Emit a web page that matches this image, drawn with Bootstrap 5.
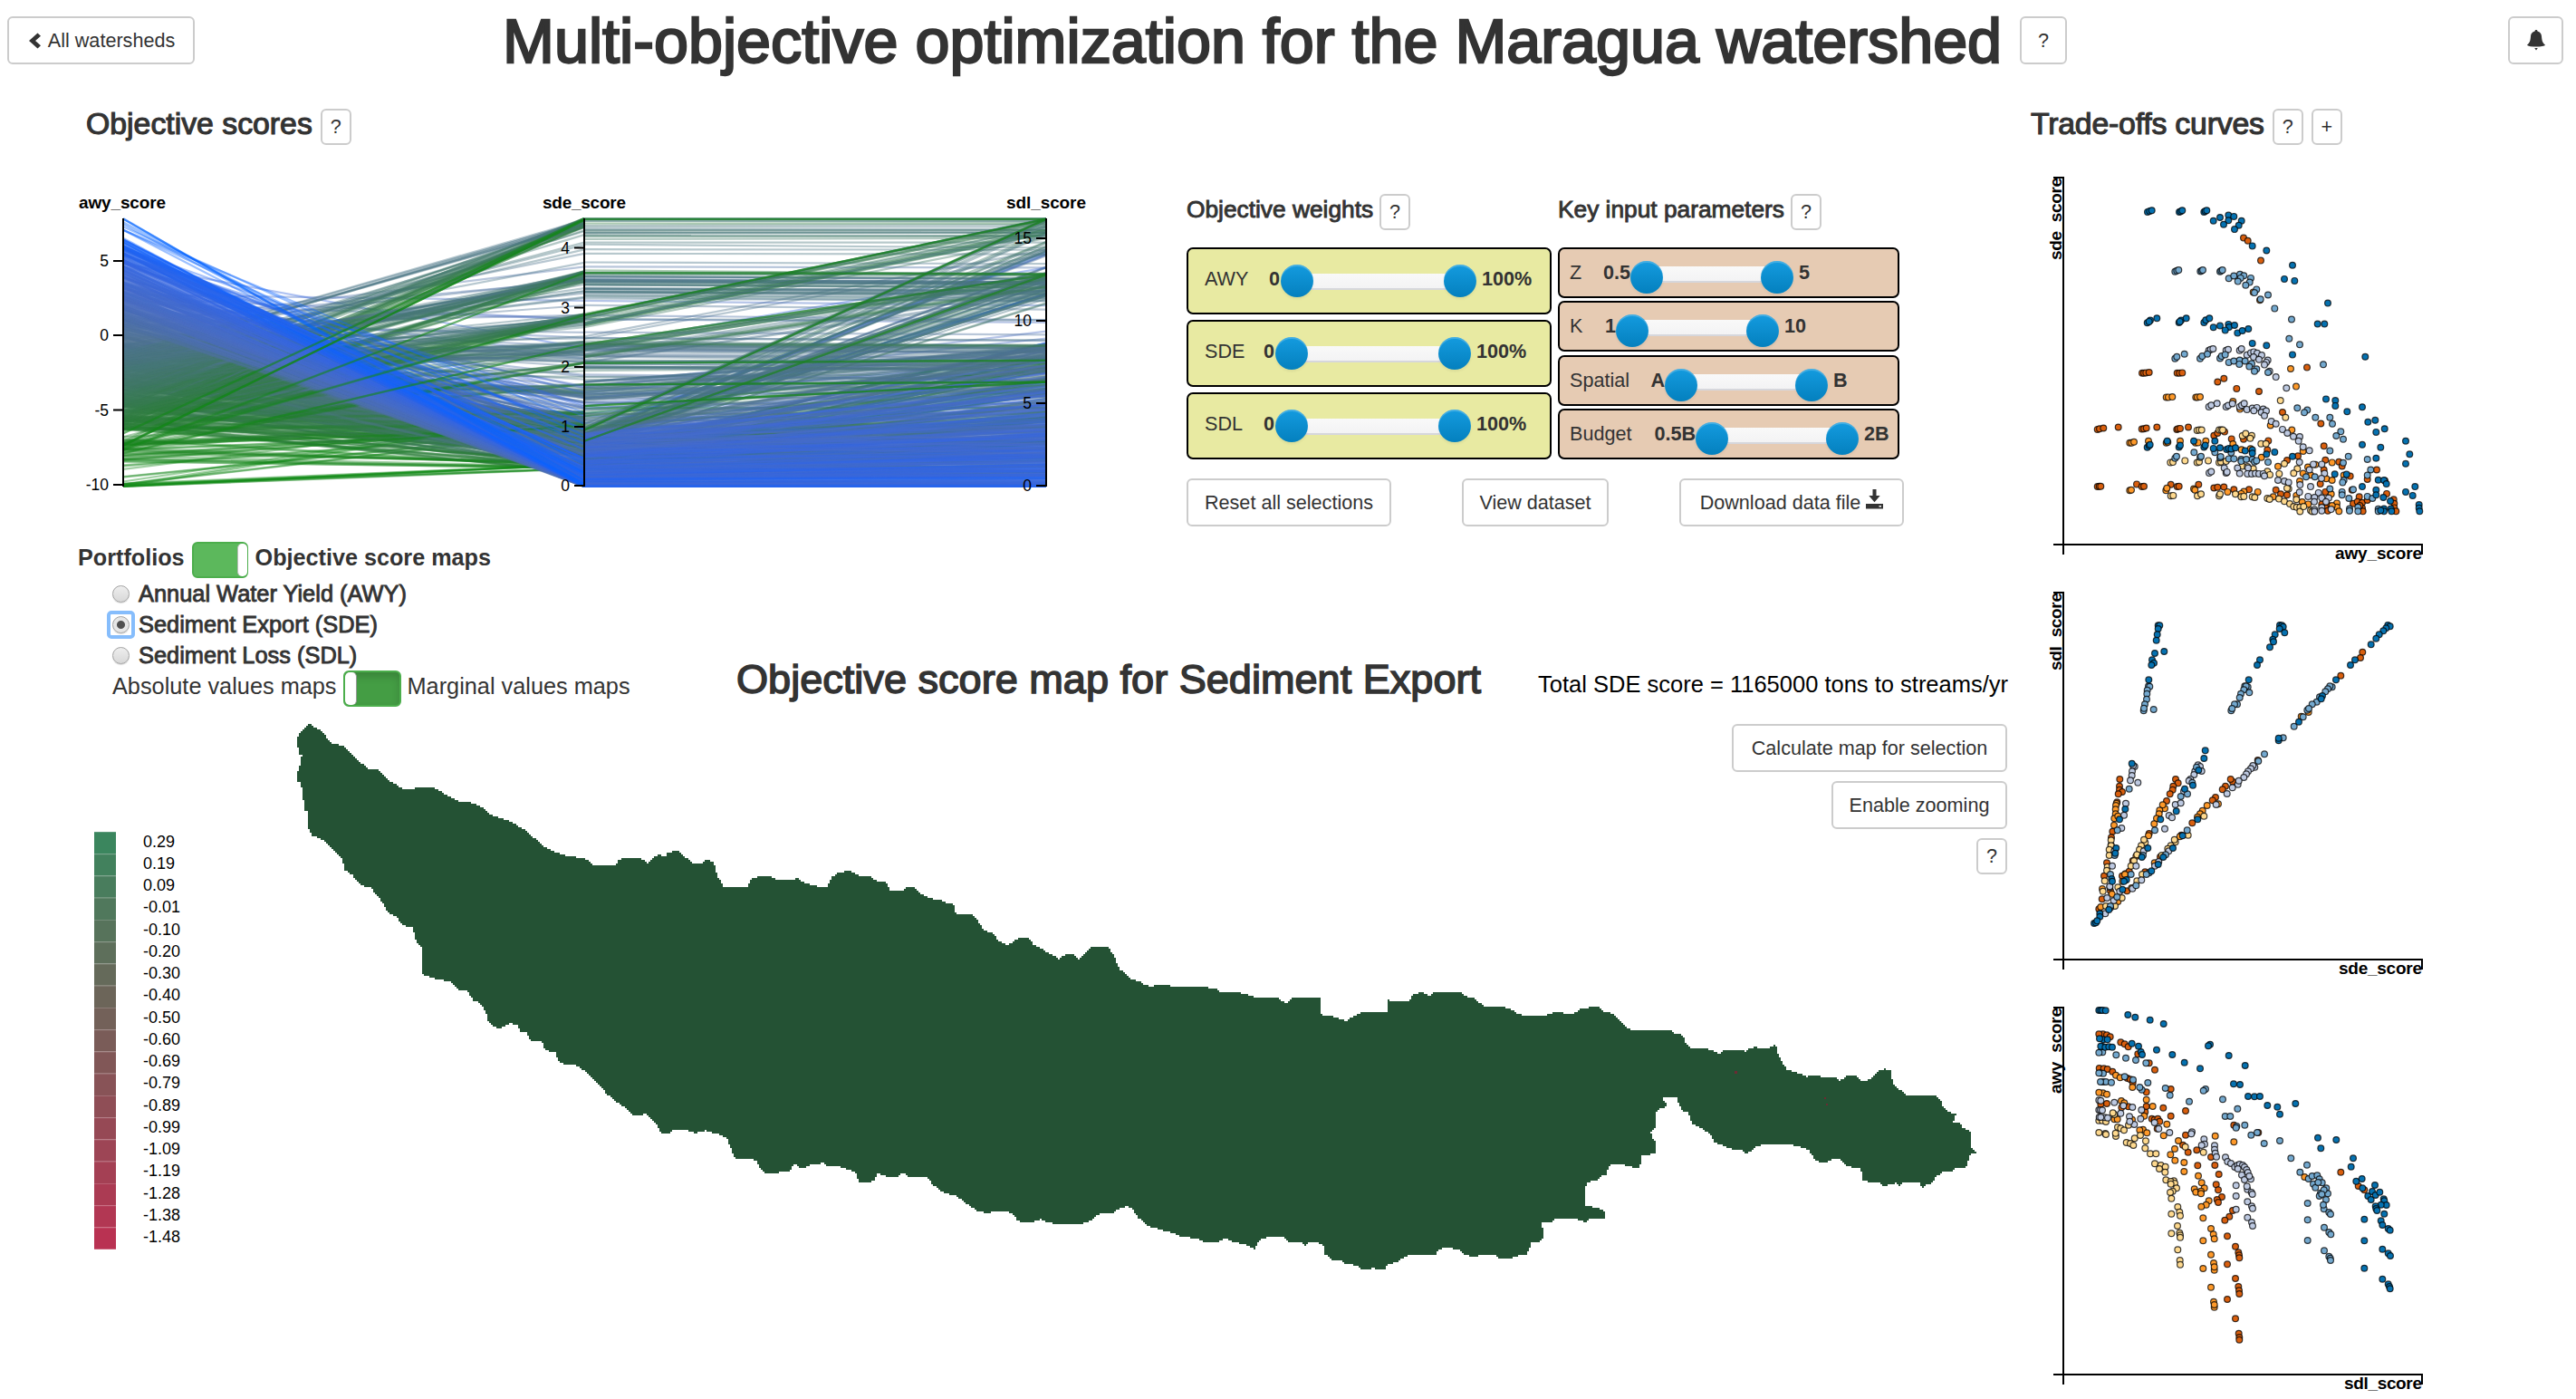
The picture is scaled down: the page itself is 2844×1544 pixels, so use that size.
<!DOCTYPE html>
<html lang="en">
<head>
<meta charset="utf-8">
<title>Multi-objective optimization for the Maragua watershed</title>
<link href="https://cdn.jsdelivr.net/npm/bootstrap@5.3.0/dist/css/bootstrap.min.css" rel="stylesheet">
<style>
body{font-family:"Liberation Sans",Arial,sans-serif;font-size:21.600px;line-height:30px;color:#333;background:#fff;width:2844px;height:1544px;overflow:hidden}
.md{-webkit-text-stroke:.034em currentColor}
.top-bar{height:100px;padding:18px 14px 0 8px}
.btn-plain{--bs-btn-color:#333;--bs-btn-bg:#fff;--bs-btn-border-color:#ccc;--bs-btn-hover-bg:#e6e6e6;--bs-btn-hover-color:#333;--bs-btn-border-radius:6px;--bs-btn-font-size:21.600px;border-width:2px;height:53px;padding:0;line-height:1;display:inline-flex;align-items:center;justify-content:center;white-space:nowrap}
.btn-q{width:34px;height:40px}
.b-back{width:207px}.b-help{width:52px}.b-bell{width:61px}.b-reset{width:226px}.b-view{width:162px}.b-down{width:248px;gap:6px}.b-calc{width:304px}.b-zoom{width:194px}
.title-group{gap:20px;margin-left:340px}
.page-title{font-size:68.300px;line-height:54px;margin:0;white-space:nowrap}
.sec-title{font-size:33.800px;line-height:32px;margin:0;white-space:nowrap}
.sub-title{font-size:26.300px;line-height:34px;margin:0;white-space:nowrap}
.left-side{width:2230px}
.upper-row{height:491px}
.score-panel{width:1310px}
.score-head,.trade-head{height:60px;padding-top:20px;gap:9px}
.trade-head{padding-left:4px}
.trade-head .sec-title{letter-spacing:-.2px}
.score-head{padding-left:95px}
.ctl-panel{width:792px;padding-top:114px}
.ctl-head{height:59px;gap:7px;padding-bottom:20px}
.weights{width:403px;margin-right:7px}
.params{width:377px}
.wstack{gap:6px}.pstack{gap:3.300px}
.wbox,.pbox{border:2px solid #000;border-radius:7px;display:flex;align-items:flex-start;white-space:nowrap}
.wbox{height:74px;background:#e8eaa2;padding:18px 0 0 18px}
.pbox{height:56px;background:#e6cbb3;padding:11px 0 0 11px}
.lab-grp{display:flex;justify-content:space-between;line-height:30px}
.g-awy{width:83px}.g-sde{width:77px}.g-z{width:67px}.g-k{width:51px}.g-sp{width:105px}.g-bu{width:139px}
.track{height:18px;background:linear-gradient(#f9f9f9,#f3f3f4);border-bottom:2px solid #d6d7dc;position:relative;margin:0 24px 0 18px}
.wbox .track{width:180px;margin-top:9px;margin-left:19px}
.pbox .track{width:144px;margin-top:8px}
.knob{position:absolute;width:36px;height:36px;border-radius:50%;background:linear-gradient(#149bdf,#0480be);box-shadow:inset 0 2px 0 rgba(255,255,255,.2),0 2px 3px rgba(0,0,0,.06)}
.wbox .knob{top:-10px}
.pbox .knob{top:-6px}
.knob.lo{left:-18px}.knob.hi{right:-18px}
.tool-row{margin-top:21px}
.map-head{height:208px;padding:7px 0 0 86px}
.map-switches{width:727px}
.sw-row{gap:8px;height:40px;font-size:25.200px;line-height:34px}
.sw{height:40px;border-radius:6px;border:2px solid #4cae4c;background:#5cb85c;display:flex}
.sw i{width:11px;background:#fff;border-radius:5px}
.sw-on{width:62px;justify-content:flex-end}
.sw-on i{border-left:1px solid #bbb;margin-right:-1px}
.sw-off{width:64px;background:#449d44;box-shadow:inset 0 5px 8px rgba(0,0,0,.16)}
.sw-off i{width:13px;border-right:1px solid #999}
.opt-list{font-size:25.400px;line-height:34px;padding-left:38px;white-space:nowrap}
.opt-list>div{gap:10px}
.abs-row{font-size:25.300px;gap:7px}
.rb{width:19px;height:19px;border-radius:50%;background:linear-gradient(#eee,#d8d8d8);border:1.500px solid #a3a3a3;box-shadow:0 1px 1px rgba(0,0,0,.15)}
.rb-on{position:relative;background:radial-gradient(circle,#505050 0 4px,#e6e6e6 5px)}
.rb-on::after{content:"";position:absolute;inset:-7px;border:4px solid #86bdfc;border-radius:5px}
.map-line{padding-top:127px;gap:63px}
.map-title{font-size:45.100px;line-height:50px;margin:0;white-space:nowrap}
.map-total{font-size:25.500px;color:#000;padding-top:15px;white-space:nowrap}
.map-stack{display:grid;width:2230px;height:746px}
.map-stack>*{grid-area:1/1}
.map-tools{justify-self:end;align-self:start;padding-right:14px;gap:10px}
svg{display:block}
svg text{font-family:"Liberation Sans",Arial,sans-serif;fill:#000}
.axl{font-weight:700;font-size:19px}
.tk{font-size:17.500px}
.lg{font-size:18px}
</style>
<script src="https://cdn.jsdelivr.net/npm/bootstrap@5.3.0/dist/js/bootstrap.bundle.min.js"></script>
</head>
<body>
<header class="top-bar d-flex align-items-start">
  <button class="btn btn-plain b-back"><svg width="15" height="20" viewBox="0 0 15 20" class="me-2"><path d="M11.500 1.500 15 4.800 9 10l6 5.200-3.500 3.300L2 10z" fill="#333"/></svg><span>All watersheds</span></button>
  <div class="title-group d-flex"><h1 class="page-title md">Multi-objective optimization for the Maragua watershed</h1><button class="btn btn-plain b-help">?</button></div>
  <button class="btn btn-plain b-bell ms-auto"><svg width="20" height="23" viewBox="0 0 20 23"><path d="M10 0c1 0 1.500.700 1.500 1.600 2.800.7 4.300 2.800 4.500 5.400.3 4.500 1 7.500 4 9.500-.5 1.500-5 2.100-10 2.100S.5 18 0 16.500c3-2 3.700-5 4-9.500.2-2.600 1.700-4.700 4.500-5.400C8.500.700 9 0 10 0zM8.200 20h3.600L10 22.500z" fill="#333"/></svg></button>
</header>
<main class="d-flex">
  <div class="left-side">
    <section class="upper-row d-flex">
      <div class="score-panel">
        <div class="score-head d-flex"><h3 class="sec-title md">Objective scores</h3><button class="btn btn-plain btn-q">?</button></div>
        <svg id="par" width="1240" height="410" viewBox="0 160 1240 410"></svg>
      </div>
      <div class="ctl-panel">
        <div class="d-flex">
          <div class="weights">
            <div class="ctl-head d-flex"><h4 class="sub-title md">Objective weights</h4><button class="btn btn-plain btn-q">?</button></div>
            <div class="wstack d-flex flex-column">
              <div class="wbox"><div class="lab-grp g-awy"><span>AWY</span><b>0</b></div><div class="track"><span class="knob lo"></span><span class="knob hi"></span></div><b>100%</b></div>
              <div class="wbox"><div class="lab-grp g-sde"><span>SDE</span><b>0</b></div><div class="track"><span class="knob lo"></span><span class="knob hi"></span></div><b>100%</b></div>
              <div class="wbox"><div class="lab-grp g-sde"><span>SDL</span><b>0</b></div><div class="track"><span class="knob lo"></span><span class="knob hi"></span></div><b>100%</b></div>
            </div>
          </div>
          <div class="params">
            <div class="ctl-head d-flex"><h4 class="sub-title md">Key input parameters</h4><button class="btn btn-plain btn-q">?</button></div>
            <div class="pstack d-flex flex-column">
              <div class="pbox"><div class="lab-grp g-z"><span>Z</span><b>0.5</b></div><div class="track"><span class="knob lo"></span><span class="knob hi"></span></div><b>5</b></div>
              <div class="pbox"><div class="lab-grp g-k"><span>K</span><b>1</b></div><div class="track"><span class="knob lo"></span><span class="knob hi"></span></div><b>10</b></div>
              <div class="pbox"><div class="lab-grp g-sp"><span>Spatial</span><b>A</b></div><div class="track"><span class="knob lo"></span><span class="knob hi"></span></div><b>B</b></div>
              <div class="pbox"><div class="lab-grp g-bu"><span>Budget</span><b>0.5B</b></div><div class="track"><span class="knob lo"></span><span class="knob hi"></span></div><b>2B</b></div>
            </div>
          </div>
        </div>
        <div class="tool-row d-flex justify-content-between">
          <button class="btn btn-plain b-reset">Reset all selections</button>
          <button class="btn btn-plain b-view">View dataset</button>
          <button class="btn btn-plain b-down"><span>Download data file</span><svg width="19" height="22" viewBox="0 0 19 22" class="mb-2"><path d="M7.500 0h4v7h4.200L9.500 14.200 3.300 7h4.200zM0 16h19v5.500H0zm14.500 2v1.500h2.500V18z" fill="#333" fill-rule="evenodd"/></svg></button>
        </div>
      </div>
    </section>
    <section class="map-head d-flex">
      <div class="map-switches">
        <div class="sw-row d-flex"><b>Portfolios</b><span class="sw sw-on"><i></i></span><b>Objective score maps</b></div>
        <div class="opt-list md">
          <div class="d-flex"><span class="rb mt-2"></span><span>Annual Water Yield (AWY)</span></div>
          <div class="d-flex"><span class="rb rb-on mt-2"></span><span>Sediment Export (SDE)</span></div>
          <div class="d-flex"><span class="rb mt-2"></span><span>Sediment Loss (SDL)</span></div>
        </div>
        <div class="opt-list abs-row d-flex"><span>Absolute values maps</span><span class="sw sw-off"><i></i></span><span>Marginal values maps</span></div>
      </div>
      <div class="map-line d-flex align-items-start"><h2 class="map-title md">Objective score map for Sediment Export</h2><span class="map-total">Total SDE score = 1165000 tons to streams/yr</span></div>
    </section>
    <section class="map-stack">
      <svg id="map" width="2230" height="745" viewBox="0 800 2230 745"></svg>
      <div class="map-tools d-flex flex-column align-items-end">
        <button class="btn btn-plain b-calc">Calculate map for selection</button>
        <button class="btn btn-plain b-zoom">Enable zooming</button>
        <button class="btn btn-plain btn-q">?</button>
      </div>
    </section>
  </div>
  <aside class="ps-2">
    <div class="trade-head d-flex"><h3 class="sec-title md">Trade-offs curves</h3><button class="btn btn-plain btn-q">?</button><button class="btn btn-plain btn-q">+</button></div>
    <svg id="s1" width="500" height="470" viewBox="2238 160 500 470"></svg>
    <svg id="s2" width="500" height="460" viewBox="2238 630 500 460"></svg>
    <svg id="s3" width="500" height="454" viewBox="2238 1090 500 454"></svg>
  </aside>
</main>
<script>
const COL={R:'#d95f0e',O:'#fe9929',Y:'#fed98e',V:'#bdc9e1',L:'#74a9cf',D:'#0571b0'};
const S1={
D:"423,396 430,393 437,391 528,396 533,394 538,391 610,396 614,393 619,391 641,425 663,414 691,407 691,424 709,411 734,425 725,440 675,437 711,453 770,507 817,522 903,570 876,615 910,621 1020,694 986,762 1009,762 1144,869 422,758 432,750 454,743 428,754 527,757 534,750 551,743 530,754 610,757 616,749 628,743 641,773 663,768 691,763 693,772 711,766 680,782 721,791 737,784 757,778 770,825 817,832 903,862 1014,1007 1045,1012 1045,1029 1084,1048 1134,1033 1153,1082 1177,1076 1208,1104 1180,1115 1134,1156 1195,1165 1278,1144 1291,1187 1278,1218 1180,1200 1309,1293 1278,1310 1301,1322 1322,1352 1322,1363 1324,1373 1043,1252 1082,1253 1187,1271 1206,1272 1214,1284 1134,1293 1180,1304 1180,1320 1204,1328 1227,1340 1206,1365 1206,1373 1229,1365 1231,1373 1195,1370 422,1165 428,1159 431,1156 488,1144 576,1144 646,1144 527,1164 531,1158 610,1164 614,1158 641,1168 663,1166 685,1171 692,1168 700,1170 714,1166 746,1176 770,1173 770,1184 817,1187 844,1180 903,1194",
L:"514,591 520,588 526,586 598,590 602,588 606,586 663,591 667,588 671,586 692,613 709,605 729,600 742,604 731,612 722,623 765,612 761,626 748,635 784,649 777,660 797,681 822,667 844,711 900,747 892,810 927,829 1005,894 514,875 520,869 545,860 597,875 604,867 621,860 663,874 668,867 680,862 692,887 709,883 728,880 727,893 746,883 768,891 760,901 784,909 777,916 822,920 919,1036 952,1043 942,1051 979,1067 1027,1067 1035,1088 1063,1113 1048,1127 1071,1138 1027,1176 1088,1194 1151,1204 1071,1215 1162,1238 1151,1256 1073,1272 1069,1279 948,1261 977,1261 1027,1300 1067,1310 1067,1320 1090,1331 1104,1302 1151,1325 1168,1331 1120,1360 1092,1365 1092,1372 1120,1373 1187,1366 1187,1373 514,1200 519,1194 577,1181 597,1197 600,1194 646,1181 663,1199 665,1195 692,1202 700,1182 709,1202 733,1204 733,1210 750,1204 770,1204 777,1212 784,1208 822,1213",
V:"626,848 632,845 640,843 683,848 690,845 728,848 734,843 752,863 765,856 775,853 786,857 801,864 774,870 792,878 821,880 816,887 810,895 827,916 848,935 883,971 626,1032 634,1027 653,1021 683,1032 690,1028 704,1022 728,1032 735,1027 743,1021 752,1041 770,1037 785,1035 775,1045 806,1040 800,1050 816,1046 810,1061 833,1080 848,1088 870,1106 886,1118 906,1129 927,1130 923,1144 938,1163 959,1175 926,1213 972,1220 1000,1220 959,1238 1009,1250 999,1266 963,1293 928,1287 926,1311 989,1313 955,1325 976,1328 1000,1330 1023,1330 975,1342 1000,1361 976,1368 976,1374 1000,1372 1031,1367 1014,1342 627,1248 634,1244 677,1232 683,1248 686,1245 721,1232 728,1250 756,1232 754,1251 768,1251 780,1250 792,1251 806,1251 810,1258 855,1272 876,1275 890,1279",
R:"741,481 755,490 798,555 951,904 405,922 411,922 418,921 428,920 521,922 529,922 538,921 655,951 676,940 718,973 792,982 870,1050 997,1087 257,1106 264,1104 277,1102 326,1099 404,1105 411,1104 419,1102 454,1099 520,1106 524,1104 531,1103 558,1099 643,1126 655,1118 678,1114 701,1137 741,1138 823,1143 820,1173 921,1193 885,1207 1007,1160 1012,1206 1057,1212 1067,1226 1182,1238 1094,1259 1151,1269 1007,1238 995,1284 1012,1310 848,1304 864,1317 885,1320 257,1293 263,1292 268,1292 387,1285 404,1293 411,1292 500,1286 521,1293 527,1292 592,1286 643,1297 655,1295 676,1294 709,1302 759,1302 1100,1304 1124,1326 1104,1348 1118,1342 1134,1345 1151,1337 1215,1316 1238,1335 1240,1348 1240,1362 1246,1373 1134,1363 1136,1373 1017,1350 1012,1362 1209,1273 1126,1355 1020,1372 1000,1350",
O:"485,1001 492,1001 505,1000 583,1001 588,1001 597,1000 706,1015 729,1040 773,658 795,684 897,908 915,966 830,1093 901,1108 364,1150 370,1150 378,1147 426,1144 485,1150 490,1148 531,1144 582,1150 590,1149 616,1144 938,1177 800,1197 734,1172 764,1169 706,1154 1034,1214 979,1221 954,1229 855,1227 938,1250 927,1275 963,1255 1015,1267 1034,1272 364,1305 369,1304 484,1305 487,1298 576,1300 580,1304 688,1310 742,1309 788,1310 733,1316 1050,1347 1050,1360 1057,1373 839,1326 916,1322 935,1343 955,1350 1031,1317 1034,1355 1073,1256",
Y:"863,1012 880,1067 587,1109 594,1108 602,1108 660,1108 667,1108 672,1108 737,1127 748,1120 768,1126 763,1135 799,1153 815,1153 499,1214 507,1213 547,1208 587,1214 594,1212 624,1208 660,1214 666,1212 683,1210 737,1226 754,1228 773,1234 876,1218 919,1234 907,1249 859,1251 820,1243 828,1254 890,1300 885,1298 500,1323 508,1322 588,1323 600,1317 660,1323 663,1317 714,1317 733,1326 742,1325 770,1326 778,1328 820,1331 827,1334 858,1333 876,1341 894,1349 916,1335 907,1358 917,1360 928,1360 928,1374 940,1358 963,1370 968,1374"};
const S2={
D:"458,151 463,151 458,162 455,181 452,200 478,237 447,243 438,265 444,275 436,282 427,331 371,608 349,759 330,793 319,888 316,905 304,990 306,998 861,150 868,151 872,155 860,162 845,181 877,175 838,197 840,205 828,223 795,265 786,282 758,331 614,565 610,591 592,630 573,680 518,766 466,793 424,888 404,918 353,993 345,998 1219,150 1226,154 1213,160 1204,169 1190,181 1180,194 1163,214 1110,265 1095,282 1047,331 1002,384 998,394 924,470 857,532 857,524 589,793 539,847 507,888 458,942 436,964 340,1025 546,692 295,1092 265,1105 265,1115 475,918 246,1137 252,1135 256,1129",
L:"426,352 430,353 422,365 421,377 420,395 414,412 410,433 411,425 443,429 362,692 323,829 314,912 300,975 300,1085 745,352 755,355 749,352 742,364 732,377 760,373 728,390 720,412 711,412 700,433 703,426 585,620 571,671 533,717 555,709 447,829 408,912 368,975 1034,355 1027,352 1020,361 1012,370 993,388 983,404 968,412 952,431 957,426 938,454 908,485 872,523 810,577 790,600 554,829 483,910 428,970 419,975 385,1012 322,1050 300,1080",
V:"380,618 375,615 372,634 371,648 366,664 391,671 351,740 345,779 337,822 313,898 306,947 298,1018 289,1053 590,613 597,618 602,633 580,634 577,645 565,660 560,665 543,700 515,744 533,739 494,780 504,787 480,824 410,898 385,947 331,1031 311,1062 283,1105 778,620 772,615 765,625 756,634 750,643 742,654 722,677 725,665 704,688 686,708 650,744 493,898 447,947 460,933 403,994 373,1022 298,1015",
R:"331,660 330,683 330,695 339,702 326,709 322,736 307,833 303,853 288,937 279,980 272,1057 262,1090 516,660 524,673 508,683 506,695 497,709 486,732 428,840 374,930 339,980 350,973 362,965 300,1030 705,668 698,660 681,683 671,694 648,720 638,730 571,805 535,845 465,917 415,967 355,1030 1135,239 1128,258 1063,317 788,597",
O:"320,740 318,747 317,760 317,775 313,790 325,782 312,812 302,878 303,895 273,1023 268,1083 480,757 473,745 463,763 461,775 453,790 445,808 426,847 385,915 348,975 340,998 305,1040 620,747 657,742 605,764 597,775 588,785 530,850 446,937 370,1020 325,1065 932,452 956,438",
Y:"302,862 302,880 296,893 296,912 290,950 288,962 281,997 275,1031 285,1080 415,870 411,860 402,880 396,893 388,910 378,930 368,947 325,1018 515,868 512,860 500,880 490,890 470,912 557,845 610,782 405,975 388,997 338,1053 315,1080"};
const S3={
D:"262,75 268,75 274,75 284,76 358,90 382,98 431,107 476,120 276,172 264,169 290,172 274,195 268,194 283,197 295,196 306,197 371,185 393,194 401,213 405,222 453,206 505,222 545,248 597,268 630,188 624,193 692,225 746,258 708,319 729,321 756,360 777,361 795,360 820,390 853,395 861,419 913,384 987,497 1048,504 997,532 1104,565 1097,593 1114,641 1133,633 1135,664 1153,690 1163,702 1167,675 1176,654 1178,687 1192,677 1205,700 1207,706 1214,720 1196,719 1178,724 1180,732 1183,738 1207,749 1196,772 1201,786 1220,798 1226,803 1141,767 1141,838 1141,929 1201,866 1220,880 1227,888 1201,965 1220,982 1224,990 1226,997",
L:"268,213 274,214 262,215 319,223 351,233 384,240 418,250 424,315 268,283 276,284 262,283 276,312 285,312 267,312 303,314 347,295 375,305 404,338 397,330 482,333 497,356 561,377 615,336 608,341 672,370 721,401 680,426 697,426 718,459 745,455 716,464 766,488 786,480 809,516 861,507 898,565 951,587 928,611 956,633 968,624 985,622 992,634 972,650 1001,646 979,662 1015,664 996,680 992,690 1020,682 1014,702 1007,733 1005,719 1024,744 1029,750 953,714 953,769 953,837 1008,794 1024,810 1030,817 1008,871 1024,890 1028,896 1029,903 988,645 1007,670 1000,684",
V:"262,373 268,374 262,405 267,405 273,406 263,429 281,430 268,429 291,431 313,380 343,391 373,396 334,416 363,427 403,405 400,434 379,453 364,443 460,467 446,447 496,480 570,478 568,484 610,502 612,518 602,522 645,523 645,536 647,548 651,560 681,562 688,576 699,582 712,594 721,588 728,585 738,588 744,594 751,603 722,600 755,612 735,620 765,634 744,636 760,624 754,668 752,658 716,655 716,690 716,734 767,678 770,684 754,709 768,724 771,731 754,761 768,777 771,789",
R:"275,154 288,157 299,163 262,154 334,181 347,187 359,196 391,220 428,250 447,272 263,267 278,268 290,270 307,278 356,300 366,304 374,315 419,346 500,336 475,398 549,408 500,425 268,386 288,384 337,397 359,394 415,412 419,393 437,434 446,437 457,434 463,443 549,488 709,455 540,521 557,545 586,538 633,561 646,588 589,589 659,618 650,652 657,670 669,693 653,702 657,711 705,738 694,758 679,770 687,823 714,857 724,877 726,886 727,895 687,916 714,963 724,990 726,1003 727,1014 687,1032 714,1096 725,1145 727,1158 727,1166 1063,611 1121,657 1141,670 455,467 790,480",
O:"275,349 262,347 288,353 318,290 332,298 373,330 336,375 346,382 419,371 440,393 313,436 323,436 372,437 412,425 408,470 397,472 421,481 487,452 476,490 525,507 647,491 709,511 513,534 499,553 514,572 544,579 544,609 591,623 602,646 611,664 578,667 583,677 600,674 600,682 626,706 617,719 601,725 607,763 633,798 607,838 641,817 644,832 633,884 607,930 642,912 644,935 644,925 633,992 642,1040 644,1058 644,1050 943,627",
Y:"262,440 273,440 285,444 313,420 308,415 324,462 334,466 345,472 360,455 283,483 262,480 285,486 318,492 317,482 380,499 399,489 353,513 366,516 376,522 417,508 415,532 432,550 451,550 548,527 608,545 447,583 467,588 462,600 482,593 481,611 484,637 510,640 500,642 513,648 500,650 519,664 506,674 498,678 502,698 523,726 502,749 529,743 531,755 522,789 502,814 529,812 531,820 531,827 523,868 530,903 531,917"};
const pts=s=>s.split(' ').map(p=>p.split(',').map(Number));
function scatter(id,data,y0,ky,top,bot,xl,yl,yw,xw,order){
  let h=`<text class="axl" transform="translate(2275.500,${top+yw}) rotate(-90)" textLength="${yw}">${yl}</text>`;
  h+=`<path d="M2267 ${top}H2278V${bot+11}M2267 ${bot}H2674V${bot+11}" fill="none" stroke="#000" stroke-width="2"/>`;
  h+=`<text class="axl" x="${2674-xw}" y="${bot+15.500}" textLength="${xw}">${xl}</text><g stroke="#000" stroke-opacity=".75" stroke-width="1.200">`;
  for(const k of order)for(const [x,y] of pts(data[k]))h+=`<circle cx="${(2230+x/3).toFixed(1)}" cy="${(y0+y/ky).toFixed(1)}" r="3.4" fill="${COL[k]}"/>`;
  document.getElementById(id).innerHTML=h+'</g>';
}
scatter('s1',S1,100,2.958,196,601,'awy_score','sde_score',91,96,'ROYVLD');
scatter('s2',S2,640,3,654,1059,'sde_score','sdl_score',86,92,'ROYVLD');
scatter('s3',S3,1090,3,1112,1517,'sdl_score','awy_score',95,86,'ROYVLD');

/* parallel coordinates */
let seed=7;const rnd=()=>(seed=(seed*16807)%2147483647)/2147483647;
const stops=[[0,[0,100,255]],[.07,[15,98,255]],[.16,[55,103,225]],[.3,[75,110,195]],[.44,[80,115,150]],[.6,[68,120,110]],[.75,[48,125,65]],[.85,[25,130,30]],[1,[15,138,20]]];
function colr(t){for(let i=1;i<stops.length;i++)if(t<=stops[i][0]){const a=stops[i-1],b=stops[i],u=(t-a[0])/(b[0]-a[0]);return 'rgb('+a[1].map((v,j)=>Math.round(v+(b[1][j]-v)*u))+')'}return 'rgb(15,138,20)'}
const Y=t=>241+t*296;
const cl=t=>Math.max(0,Math.min(1,t));
const A=[],B=[];
for(const k in S1)for(const [x,y] of pts(S1[k])){const a=cl((1324-x)/1067),s=cl((y-393)/981);A.push([a,s,k]);
  if(s>.75&&a>.1)A.push([cl(a+(rnd()-.5)*.02),cl(s+(rnd()-.5)*.004),k])}
/* awy/sde pairs along the zero-sediment frontier */
for(let i=0;i<60;i++){A.push([.075+rnd()*.29,1-Math.pow(rnd(),2)*.07,'D'])}
for(let i=0;i<110;i++){A.push([.38+rnd()*.4,.74+rnd()*.2,'O'])}
for(let i=0;i<26;i++){A.push([.5+rnd()*.3,.005+rnd()*.03,'D'])}
for(let i=0;i<26;i++){A.push([.5+rnd()*.26,.2+rnd()*.04,'L'])}
for(let i=0;i<26;i++){A.push([.5+rnd()*.3,.355+rnd()*.03,'D'])}
const seg=(x1,y1,x2,y2,t,s)=>`<path d="M${x1} ${y1.toFixed(1)}L${x2} ${y2.toFixed(1)}" stroke="${colr(t)}"/>`;
const G=[[.8,0],[.84,.003],[.84,.003],[.86,.2],[.85,.36],[.87,.47],[.92,.79],[.99,.93],[1,.93],[.9,.93],[.86,.79],[.82,.93],[.96,.79],[.985,.79]];
const green=f=>{let h='';for(const [a,s] of G)if(f(s))for(let i=0;i<2;i++)h+=seg(136,Y(cl(a+rnd()*.008)),645,Y(cl(s+rnd()*.004)),.93);return h};
let L=green(s=>s>.6);
const rank=p=>(p[1]>.9&&p[0]<.4?3-p[0]:p[0]<.14?4:p[0]>.42&&p[1]<.6?2.5:rnd()*2);
A.map(p=>[rank(p),p]).sort((p,q)=>p[0]-q[0]).forEach(([,p])=>{L+=seg(136,Y(p[0]),645,Y(p[1]),p[0])});
L+=green(s=>s<=.6);
for(const k in S2)for(const [x,y] of pts(S2[k])){
  const s=cl((1222-x)/970),d=cl((y-150)/985);
  const m=A.filter(p=>p[2]===k&&Math.abs(p[1]-s)<.02);
  const n=s>.8?3:1;
  for(let i=0;i<n;i++){const a=m.length?m[Math.floor(rnd()*m.length)][0]:.55;B.push([cl(s+(i?(rnd()-.5)*.012:0)),cl(d+(i?(rnd()-.5)*.012:0)),a])}
}
const fan=(n,s0,s1,d0,d1,a0,a1)=>{for(let i=0;i<n;i++){const u=rnd();B.push([s0+(s1-s0)*u,d0+(d1-d0)*cl(u+(rnd()-.5)*.1),a0+(a1-a0)*rnd()])}};
fan(12,0,.08,0,.08,.52,.66);fan(24,.2,.29,.208,.3,.45,.58);fan(20,.465,.56,.475,.57,.42,.55);
fan(10,.36,.41,.003,.07,.6,.75);fan(10,.78,.84,.003,.13,.52,.66);fan(8,.47,.52,.21,.26,.58,.7);fan(10,.79,.86,.21,.32,.5,.62);
fan(22,.6,.68,.475,.58,.4,.55);fan(24,.8,.88,.475,.62,.42,.55);
for(let i=0;i<230;i++){const u=Math.pow(rnd(),1.3);const s=1-u*.2;B.push([s,cl(1-u*(.15+rnd()*.35)),.08+rnd()*.14+u*.12])}
for(let i=0;i<3;i++){B.push([.003,.003,.84],[.203,.208,.84],[.468,.475,.66],[.36,.003,.86],[.47,.21,.8],[.79,.003,.84],[.83,.21,.82],[.7,.61,.88],[.54,.53,.84],[.62,.61,.88])}
for(const [s,d,a] of B)L+=seg(645,Y(s),1155,Y(d),a);
let P=`<g fill="none" stroke-width="2.200" stroke-opacity=".4">${L}</g><g stroke="#000" stroke-width="2" fill="none"><path d="M136 241V537M645 241V537M1155 241V537"/></g>`;
const tick=(x,y,t)=>{P+=`<path d="M${x-11} ${y}H${x}" stroke="#000" stroke-width="2"/><text class="tk" x="${x-16}" y="${y+6}" text-anchor="end">${t}</text>`};
[[288,'5'],[370,'0'],[452.500,'-5'],[535,'-10']].forEach(a=>tick(136,a[0],a[1]));
[[273.500,'4'],[339.500,'3'],[405,'2'],[471,'1'],[536,'0']].forEach(a=>tick(645,a[0],a[1]));
[[263,'15'],[354,'10'],[445,'5'],[536,'0']].forEach(a=>tick(1155,a[0],a[1]));
P+='<text class="axl" x="87" y="230" textLength="96">awy_score</text><text class="axl" x="599" y="230" textLength="92">sde_score</text><text class="axl" x="1111" y="230" textLength="88">sdl_score</text>';
document.getElementById('par').innerHTML=P;

/* legend and watershed raster outline */
const T1="65,44 72,58 85,68 105,104 122,106 140,136 168,172 184,173 200,198 226,225 246,224 250,220 280,221 300,240 325,260 345,262 362,273 380,295 412,312 440,338 472,382 500,402 545,415 556,432 593,433 602,415 625,410 640,413 650,424 658,411 672,402 679,410 684,399 703,389 715,410 729,424 745,424 752,415 765,424 772,462 783,490 822,490 832,465 858,459 878,472 904,472 910,463 918,475 935,486 962,490 969,462 980,451 998,446 1016,459 1038,461 1042,472 1062,475 1070,498 1095,498 1100,490 1112,492 1122,507 1138,520 1158,525 1170,535 1180,537 1185,565 1213,566 1222,580 1232,607 1248,615 1258,638 1270,641 1273,648 1280,640 1295,627 1310,629 1320,648 1332,655 1345,671 1358,677 1361,688 1368,675 1385,671 1398,685 1408,670 1418,650 1445,650 1455,668 1468,713 1485,735";
const T2="0,188 12,190 18,201 35,210 47,201 60,201 70,210 130,211 150,217 158,226 190,228 220,243 262,248 277,264 286,248 315,243 340,247 341,302 360,308 385,323 400,308 414,292 461,291 462,254 474,259 496,258 508,234 523,228 536,242 543,228 590,227 600,242 616,246 622,260 636,275 668,276 685,286 695,302 720,307 745,306 755,297 772,292 780,301 796,300 809,281 840,276 848,291 860,293 878,320 893,350 915,355 936,355 940,351 968,352 978,366 992,370 998,400 1006,413 1032,412 1050,424 1058,432 1066,417 1104,417 1106,427 1110,414 1124,410 1135,415 1150,410 1160,400 1164,430 1172,460 1180,485 1200,496 1216,508 1230,503 1245,508 1268,510 1275,523 1288,503 1303,504 1315,523 1330,517 1342,492 1356,481 1367,490 1371,527 1382,550 1396,567 1448,568 1458,590 1465,617 1485,633 1481,658 1495,665 1497,680 1509,683 1513,710 1511,738 1521,760 1511,765 1503,808 1484,807 1478,822 1462,823 1448,842 1438,868 1432,860 1425,880 1420,860 1405,855 1390,860 1384,870 1378,860 1358,870 1345,858 1318,853 1313,810 1288,805 1275,778 1264,780 1252,793 1240,792 1228,775 1220,750 1195,735 1163,731 1128,736 1120,750 1108,761 1100,752 1075,745 1062,732 1048,725 1045,703 1030,682 1010,662 1003,627 992,620 982,578 955,578 966,607 952,612 944,628 943,680 935,690 937,712 945,728 945,762 920,768 915,809 890,805 885,795 867,795 858,812 856,832 846,838 840,853 820,856 817,880 818,935 835,942 852,952 851,977 825,979 820,988 805,985 803,979 762,979 758,989 738,990 742,1040 738,1052 720,1058 712,1095 690,1104 680,1112 662,1111 655,1099 636,1097 614,1106 600,1095 590,1082 565,1070 552,1084 548,1096 500,1097 480,1118 460,1132 457,1145 440,1145 436,1136 430,1145 415,1145 408,1133 385,1128 380,1118 360,1116 348,1095 344,1060 318,1055 313,1069 308,1058 285,1058 275,1040 256,1038 232,1043 220,1080 205,1062 185,1056 168,1043 155,1057 132,1058 120,1044 92,1038 60,1018 30,1003 12,975 0,945";
const T3="1482,1352 1462,1365 1455,1372 1433,1373 1420,1390 1405,1399 1378,1402 1345,1398 1332,1388 1322,1394 1301,1398 1290,1390 1287,1378 1272,1365 1250,1366 1242,1372 1225,1368 1205,1348 1185,1325 1165,1318 1146,1296 1134,1276 1102,1272 1096,1262 1088,1264 1084,1275 1068,1273 1048,1264 1044,1284 1032,1289 1018,1288 1010,1260 985,1247 962,1244 955,1237 935,1238 930,1246 915,1249 905,1238 898,1258 875,1263 858,1266 848,1255 840,1232 828,1223 803,1223 795,1195 788,1168 775,1158 752,1149 733,1155 712,1144 695,1149 688,1157 675,1157 665,1130 647,1102 640,1108 627,1108 615,1088 598,1073 580,1048 562,1015 540,985 522,967 508,971 495,957 492,937 474,931 468,908 448,905 442,883 431,881 425,863 414,858 393,874 376,856 370,824 362,805 348,795 340,772 324,767 308,745 285,738 262,728 260,655 248,630 245,598 230,595 215,570 200,555 185,515 170,490 155,486 140,458 127,443 122,412 105,385 90,362 70,350 63,330 63,283 56,281 54,235 50,206 45,203 45,178 50,150 52,133 47,130 44,90 48,72 60,57 65,44";
const f8=p=>[300+p[0]/1.568,780+p[1]/2.45],f9=p=>[1250+p[0]/1.633,1020+p[1]/3];
const ring=[...pts(T1).map(f8),...pts(T2).map(f9),...pts(T3).map(f8)];
const C=2,q=v=>Math.round(v/C)*C;
let px=q(ring[0][0]),py=q(ring[0][1]),d=`M${px} ${py}`;
for(let i=1;i<ring.length;i++){const [x0,y0]=ring[i-1],[x1,y1]=ring[i],n=Math.ceil(Math.hypot(x1-x0,y1-y0));
  for(let j=1;j<=n;j++){const x=q(x0+(x1-x0)*j/n),y=q(y0+(y1-y0)*j/n);if(x!==px){d+='H'+x;px=x}if(y!==py){d+='V'+y;py=y}}}
let M=`<path d="${d}Z" fill="#245234"/><path d="M1915 1183h3v3h-3zM2014 1212h2v2h-2zM2016 1219h2v2h-2z" fill="#6b2b33"/>`;
const vals=['0.29','0.19','0.09','-0.01','-0.10','-0.20','-0.30','-0.40','-0.50','-0.60','-0.69','-0.79','-0.89','-0.99','-1.09','-1.19','-1.28','-1.38','-1.48'];
vals.forEach((v,i)=>{const t=i/18,g=[59+t*126,134-t*84,94-t*12].map(Math.round);
  M+=`<rect x="104" y="${919+i*24.25}" width="24" height="24.25" fill="rgb(${g})"/><path d="M104 ${919.500+i*24.25}h24" stroke="#fff" stroke-opacity=".18"/><text class="lg" x="158" y="${935.500+i*24.25}">${v}</text>`});
document.getElementById('map').innerHTML=M;
</script>
</body>
</html>
